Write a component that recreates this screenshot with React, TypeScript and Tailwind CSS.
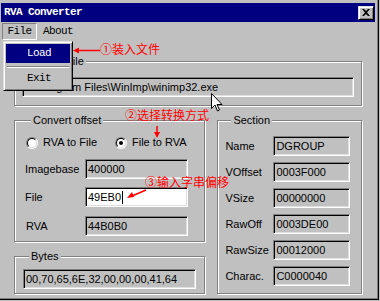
import React from 'react';

const sunken =
  'border border-t-[#808080] border-l-[#808080] border-b-white border-r-white shadow-[inset_1px_1px_0_#000,inset_-1px_-1px_0_#dfdfdf]';
const raised =
  'border border-t-[#dfdfdf] border-l-[#dfdfdf] border-b-black border-r-black shadow-[inset_1px_1px_0_#fff,inset_-1px_-1px_0_#808080]';
const groupBox =
  'border border-[#808080] shadow-[inset_1px_1px_0_#fff,1px_1px_0_#fff] min-w-0';

const Field: React.FC<{ value: string; white?: boolean; className?: string }> = ({ value, white, className }) => (
  <div
    className={`${sunken} h-[20px] pl-[2px] flex items-center text-[11px] text-black whitespace-nowrap overflow-hidden ${
      white ? 'bg-white' : 'bg-[#c0c0c0]'
    } ${className ?? ''}`}
  >
    {value}
  </div>
);

const Legend: React.FC<{ children: React.ReactNode }> = ({ children }) => (
  <legend className="ml-[6px] px-[2px] text-[11px] leading-[13px] bg-[#c0c0c0] text-black">{children}</legend>
);

const Radio: React.FC<{ checked?: boolean; label: string }> = ({ checked, label }) => (
  <label className="flex items-center gap-[5px] text-[11px] leading-[13px]">
    <span className="w-[12px] h-[12px] rounded-full border border-t-[#808080] border-l-[#808080] border-b-white border-r-white flex">
      <span className="flex-1 rounded-full border border-t-black border-l-black border-b-[#dfdfdf] border-r-[#dfdfdf] bg-white flex items-center justify-center">
        {checked && <span className="w-[4px] h-[4px] rounded-full bg-black" />}
      </span>
    </span>
    {label}
  </label>
);

const sectionRows: [string, string][] = [
  ['Name', 'DGROUP'],
  ['VOffset', '0003F000'],
  ['VSize', '00000000'],
  ['RawOff', '0003DE00'],
  ['RawSize', '00012000'],
  ['Charac.', 'C0000040'],
];

const mono = "font-['Liberation_Mono','DejaVu_Sans_Mono',monospace]";

export default function App() {
  return (
    <div className="relative w-[380px] h-[301px] overflow-hidden bg-[#c0c0c0] font-['Liberation_Sans','Noto_Sans_CJK_SC',sans-serif] text-black">
      <div className="w-[379px] h-[300px] border-r border-b border-r-black border-b-black shadow-[inset_-1px_-1px_0_#808080] pt-[3px] pl-[1px] pr-[3px] flex flex-col">
        {/* title bar */}
        <div className="h-[19px] bg-[#000080] flex items-center justify-between pl-[3px] pr-[1px]">
          <span className={`${mono} text-white text-[11px] tracking-[-0.6px] font-bold`}>RVA Converter</span>
          <button className={`${raised} w-[16px] h-[14px] bg-[#c0c0c0] flex items-center justify-center`}>
            <svg width="8" height="7" viewBox="0 0 8 7">
              <path d="M0 0h2l2 2 2-2h2L5 3.5 8 7H6L4 5 2 7H0l3-3.5z" fill="#000" />
            </svg>
          </button>
        </div>

        {/* menu bar */}
        <div className={`${mono} h-[19px] flex items-center text-[11px] tracking-[-0.6px] pl-[1px]`}>
          <span className="h-[17px] w-[35px] flex items-center justify-center border border-t-[#808080] border-l-[#808080] border-b-white border-r-white">
            File
          </span>
          <span className="ml-[6px]">About</span>
        </div>

        {/* content */}
        <div className="flex-1 px-[13px] pt-[14px] flex flex-col">
          <fieldset className={`${groupBox} px-[7px] pt-[9px] pb-[8px]`}>
            <Legend>Loaded file</Legend>
            <Field value="C:\Program Files\WinImp\winimp32.exe" className="h-[19px]" />
          </fieldset>

          <div className="flex gap-[12px] mt-[8px]">
            <div className="w-[192px] flex flex-col">
              <fieldset className={`${groupBox} pl-[10px] pr-[16px] pt-[9px] pb-[5px]`}>
                <Legend>Convert offset</Legend>
                <div className="flex items-center h-[13px]">
                  <div className="w-[90px] pl-px">
                    <Radio label="RVA to File" />
                  </div>
                  <Radio checked label="File to RVA" />
                </div>
                <div className="flex items-center mt-[10px]">
                  <span className="w-[60px] text-[11px]">Imagebase</span>
                  <Field value="400000" className="flex-1" />
                </div>
                <div className="flex items-center mt-[8px]">
                  <span className="w-[60px] text-[11px]">File</span>
                  <Field value="49EB0" white className="flex-1" />
                </div>
                <div className="flex items-center mt-[9px]">
                  <span className="w-[60px] text-[11px] pl-px">RVA</span>
                  <Field value="44B0B0" className="flex-1" />
                </div>
              </fieldset>

              <fieldset className={`${groupBox} mt-[8px] px-[8px] pt-[6px] pb-[4px]`}>
                <Legend>Bytes</Legend>
                <Field value="00,70,65,6E,32,00,00,00,41,64" className="h-[18px]" />
              </fieldset>
            </div>

            <fieldset className={`${groupBox} w-[145px] pl-[7px] pr-[11px] pt-[9px] pb-[5px]`}>
              <Legend>Section</Legend>
              <div className="flex flex-col gap-[6px]">
                {sectionRows.map(([label, value]) => (
                  <div key={label} className="flex items-center">
                    <span className="w-[48px] text-[11px]">{label}</span>
                    <Field value={value} className="flex-1" />
                  </div>
                ))}
              </div>
            </fieldset>
          </div>
        </div>
      </div>

      {/* text cursor in File field */}
      <div className="absolute left-[122px] top-[191px] w-px h-[13px] bg-black" />

      {/* dropdown menu */}
      <div className={`${raised} ${mono} absolute left-[3px] top-[41px] w-[70px] h-[50px] bg-[#c0c0c0] p-[2px] flex flex-col text-[11px] tracking-[-0.6px]`}>
        <div className="h-[19px] bg-[#000080] text-white flex items-center pl-[21px]">Load</div>
        <div className="mt-[3px] mx-[1px] h-[2px] border-t border-t-[#808080] border-b border-b-white" />
        <div className="flex-1 flex items-center pl-[21px]">Exit</div>
      </div>

      {/* annotations */}
      <span className="absolute left-[100px] top-[43px] text-[12px] leading-[14px] text-[#ff0000] whitespace-nowrap">①装入文件</span>
      <span className="absolute left-[125px] top-[109px] text-[12px] leading-[14px] text-[#ff0000] whitespace-nowrap">②选择转换方式</span>
      <span className="absolute left-[145px] top-[176px] text-[12px] leading-[14px] text-[#ff0000] whitespace-nowrap">③输入字串偏移</span>
      <svg className="absolute left-0 top-0 pointer-events-none" width="380" height="301">
        <g stroke="#ff0000" strokeWidth="1.5" fill="#ff0000">
          <line x1="78" y1="50.5" x2="100" y2="50.5" />
          <path d="M73 50.5l6-3v6z" stroke="none" />
          <line x1="157" y1="126" x2="157" y2="133" />
          <path d="M157 138l-3-6h6z" stroke="none" />
          <line x1="146" y1="190" x2="132" y2="196" />
          <path d="M127 198l5-6 2 5z" stroke="none" />
        </g>
      </svg>

      {/* mouse pointer */}
      <svg className="absolute left-[211px] top-[93px]" width="12" height="19" viewBox="0 0 12 19">
        <path d="M0.5 0.5v15l3.5-3.5 2.5 6 2-1-2.5-5.5h5z" fill="#fff" stroke="#000" strokeWidth="1" />
      </svg>
    </div>
  );
}
